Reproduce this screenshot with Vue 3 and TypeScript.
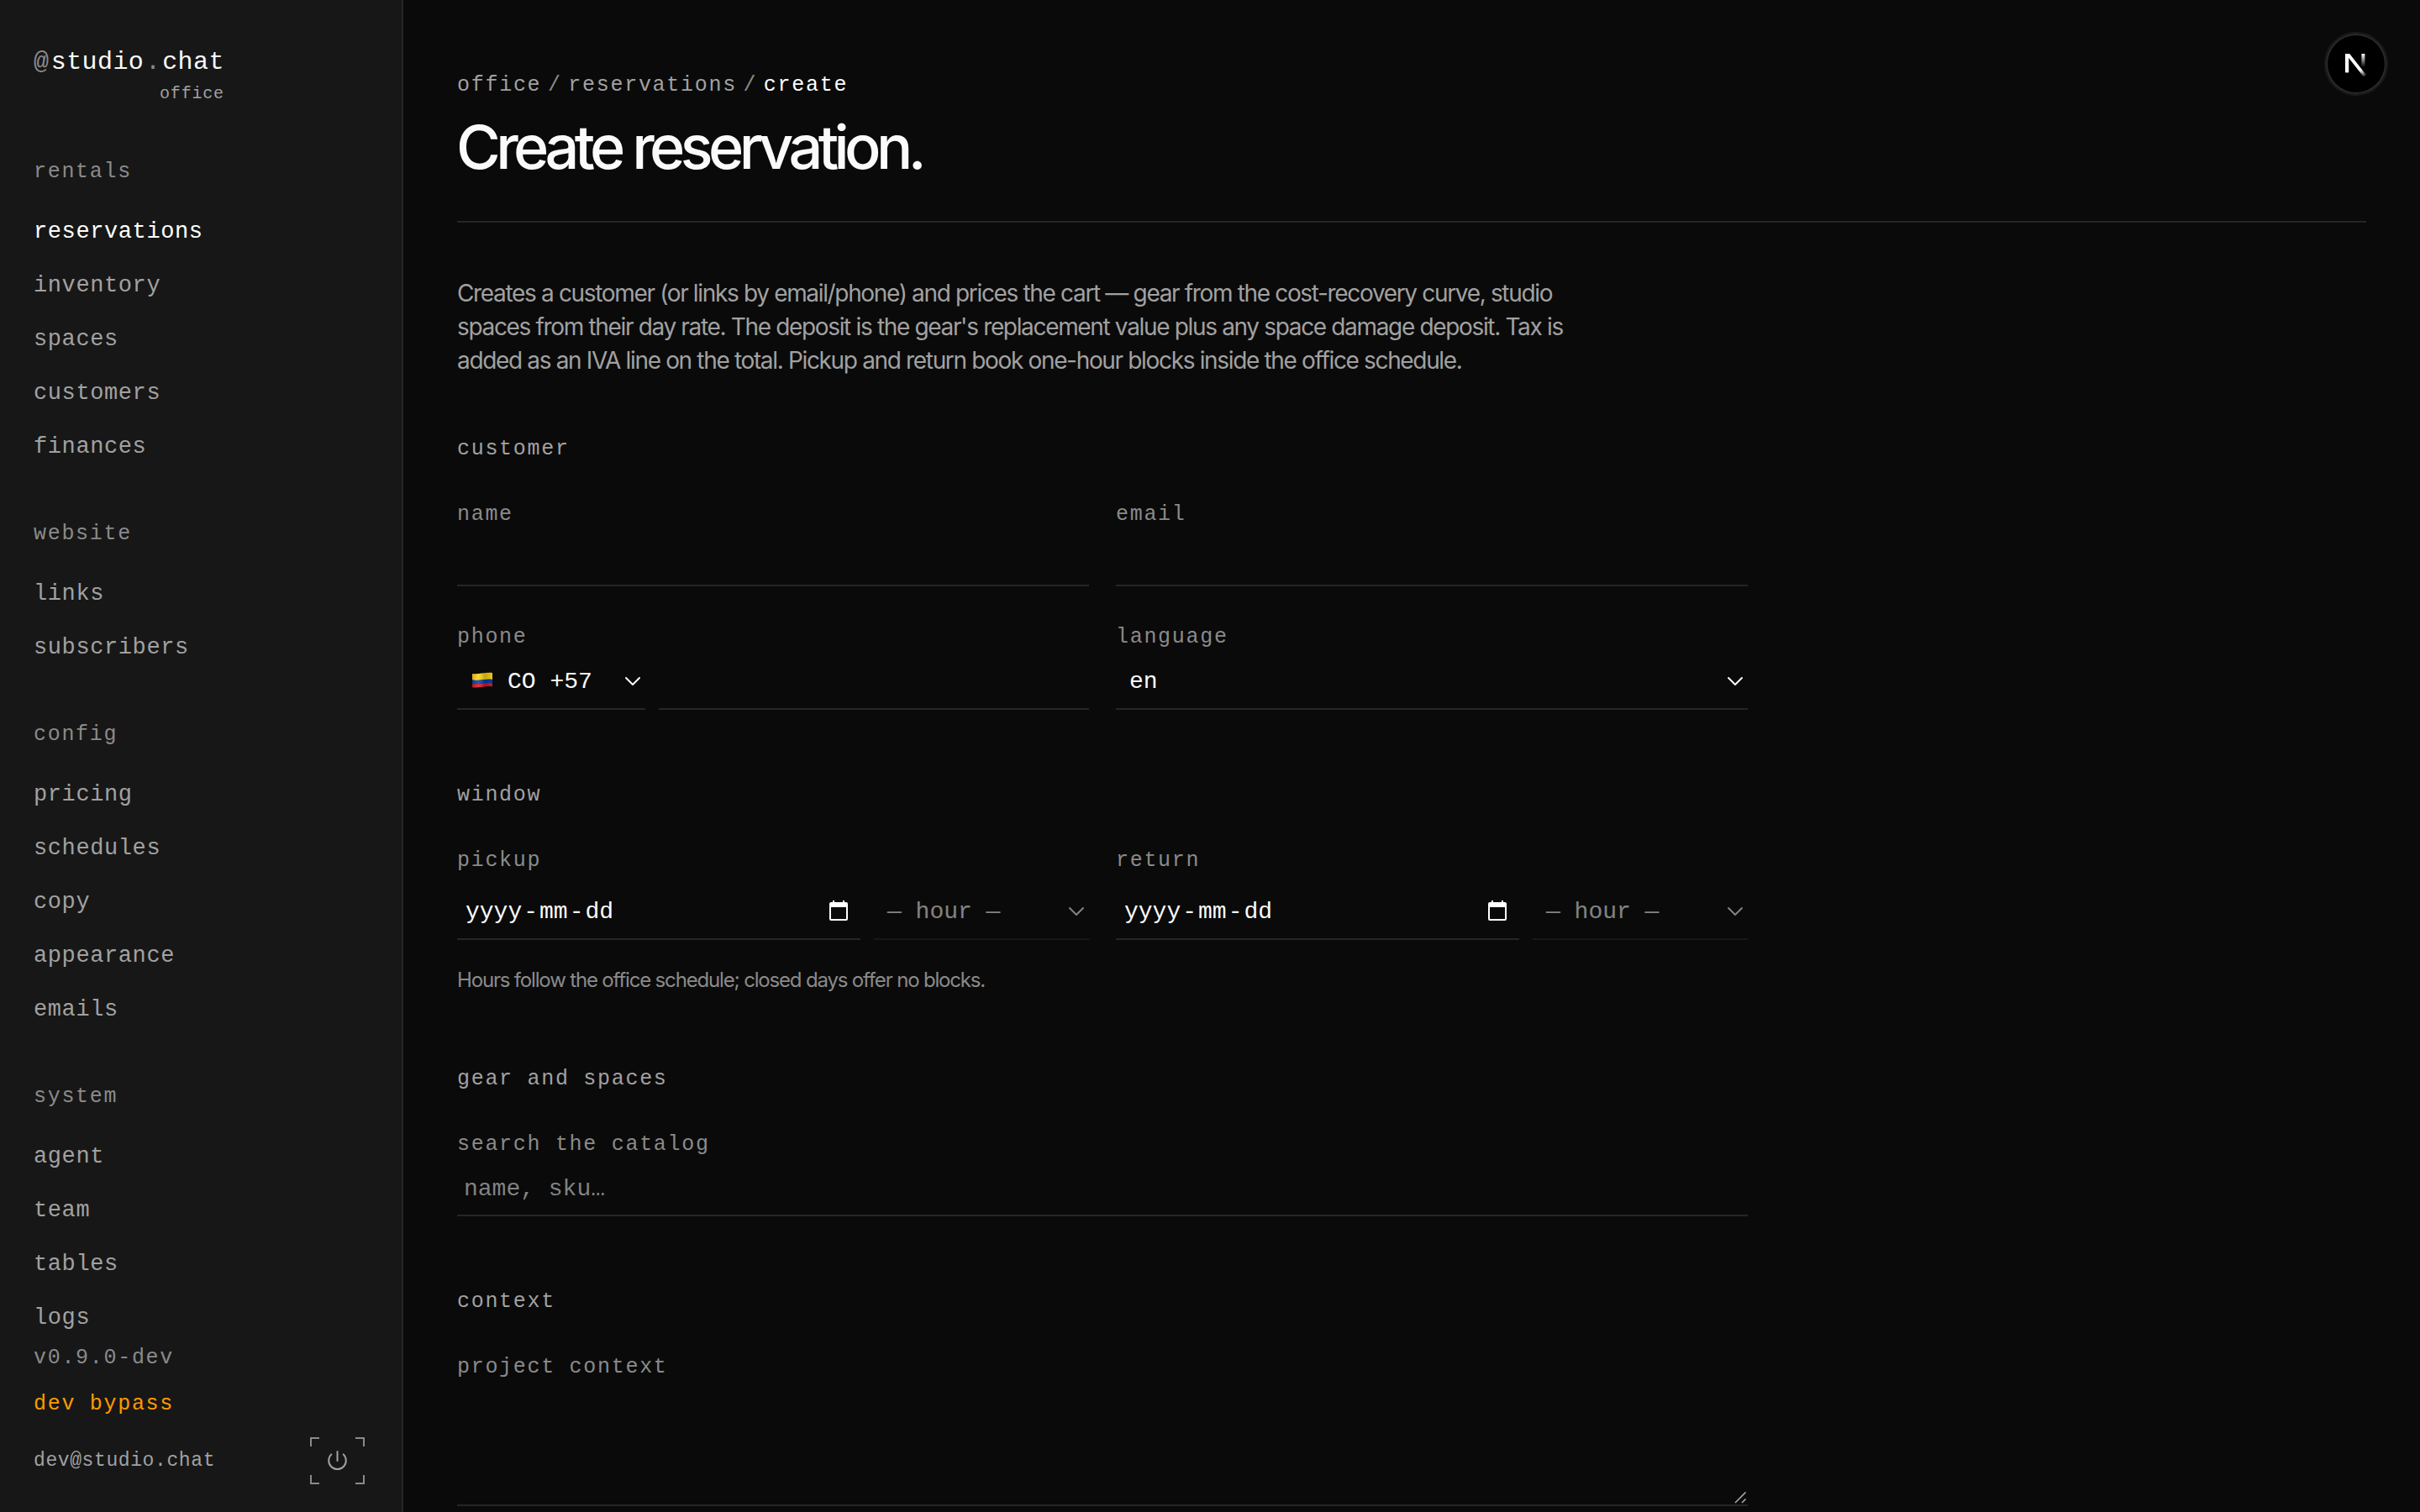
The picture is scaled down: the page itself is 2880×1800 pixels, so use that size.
<script setup lang="ts">
interface NavGroup {
  label: string
  items: string[]
}

const groups: NavGroup[] = [
  { label: 'rentals', items: ['reservations', 'inventory', 'spaces', 'customers', 'finances'] },
  { label: 'website', items: ['links', 'subscribers'] },
  { label: 'config', items: ['pricing', 'schedules', 'copy', 'appearance', 'emails'] },
  { label: 'system', items: ['agent', 'team', 'tables', 'logs'] },
]
const active = 'reservations'
const windows: string[] = ['pickup', 'return']
</script>

<template>
  <div class="app">
    <aside class="sidebar">
      <div class="brand">
        <div class="logo"><span class="dim at">@</span>studio<span class="dim dot">.</span>chat</div>
        <div class="tag">office</div>
      </div>
      <nav class="nav">
        <div v-for="g in groups" :key="g.label" class="group">
          <h2 class="label">{{ g.label }}</h2>
          <a v-for="i in g.items" :key="i" class="item" :class="{ on: i === active }">{{ i }}</a>
        </div>
      </nav>
      <footer class="foot">
        <div class="label">v0.9.0-dev</div>
        <div class="label bypass">dev bypass</div>
        <div class="user">
          <span class="mail">dev@studio.chat</span>
          <svg class="power" width="65" height="56" viewBox="0 0 65 56" fill="none" stroke="#8a8a8a" stroke-width="2">
            <path d="M1 11V1H11M54 1H64V11M64 45V55H54M11 55H1V45" />
            <path d="M32.5 17V28M25.3 20.4A10.3 10.3 0 1 0 39.7 20.4" stroke="#a1a1a1" stroke-linecap="round" />
          </svg>
        </div>
      </footer>
    </aside>

    <main class="main">
      <header class="head">
        <div class="crumbs">
          <span>office</span><span class="sep">/</span><span>reservations</span><span class="sep">/</span><span class="here">create</span>
        </div>
        <h1>Create reservation.</h1>
      </header>

      <p class="intro">
        Creates a customer (or links by email/phone) and prices the cart — gear from the cost-recovery curve, studio<br />
        spaces from their day rate. The deposit is the gear's replacement value plus any space damage deposit. Tax is<br />
        added as an IVA line on the total. Pickup and return book one-hour blocks inside the office schedule.
      </p>

      <div class="form">
        <section>
          <h3>customer</h3>
          <div class="grid">
            <div class="field"><label>name</label><div class="control"></div></div>
            <div class="field"><label>email</label><div class="control"></div></div>
            <div class="field">
              <label>phone</label>
              <div class="row">
                <div class="control tall select country">
                  <svg class="flag" width="26" height="20" viewBox="0 0 26 20">
                    <defs>
                      <linearGradient id="wave" x1="0" x2="1" y1="0" y2="0">
                        <stop offset="0" stop-color="#000" stop-opacity=".15" />
                        <stop offset=".3" stop-color="#fff" stop-opacity=".12" />
                        <stop offset=".62" stop-color="#000" stop-opacity=".22" />
                        <stop offset="1" stop-color="#000" stop-opacity=".05" />
                      </linearGradient>
                    </defs>
                    <path d="M1 2C8 3.4 16 -.2 25 1V9C16 7.6 9 11 1 9.6Z" fill="#fbd116" />
                    <path d="M1 9.6C9 11 16 7.6 25 9V13.4C16 12 9 15.4 1 14Z" fill="#0b3fa8" />
                    <path d="M1 14C9 15.4 16 12 25 13.4V17.2C16 16 9 19.6 1 18.2Z" fill="#d6182c" />
                    <path d="M1 2C8 3.4 16 -.2 25 1V17.2C16 16 9 19.6 1 18.2Z" fill="url(#wave)" />
                  </svg>
                  <span class="code">CO +57</span>
                  <svg class="chev" width="20" height="12" viewBox="0 0 20 12"><path d="M2 2L10 10L18 2" /></svg>
                </div>
                <div class="control tall grow"></div>
              </div>
            </div>
            <div class="field">
              <label>language</label>
              <div class="control tall select">
                <span>en</span>
                <svg class="chev" width="20" height="12" viewBox="0 0 20 12"><path d="M2 2L10 10L18 2" /></svg>
              </div>
            </div>
          </div>
        </section>

        <section>
          <h3>window</h3>
          <div class="grid">
            <div v-for="w in windows" :key="w" class="field">
              <label>{{ w }}</label>
              <div class="row">
                <div class="control date grow">
                  <span class="parts"><span>yyyy</span><span>-</span><span>mm</span><span>-</span><span>dd</span></span>
                  <svg class="calendar" width="22" height="24" viewBox="0 0 22 24" fill="#fff">
                    <path fill-rule="evenodd" d="M4 0H6V2H16V0H18V2H20Q22 2 22 4V22Q22 24 20 24H2Q0 24 0 22V4Q0 2 2 2H4ZM2 8V22H20V8Z" />
                  </svg>
                </div>
                <div class="control date select hour">
                  <span>— hour —</span>
                  <svg class="chev" width="20" height="12" viewBox="0 0 20 12"><path d="M2 2L10 10L18 2" /></svg>
                </div>
              </div>
            </div>
          </div>
          <p class="note">Hours follow the office schedule; closed days offer no blocks.</p>
        </section>

        <section class="after-note">
          <h3>gear and spaces</h3>
          <div class="field">
            <label>search the catalog</label>
            <div class="control search">name, sku…</div>
          </div>
        </section>

        <section>
          <h3>context</h3>
          <div class="field">
            <label>project context</label>
            <div class="control area">
              <svg width="15" height="15" viewBox="0 0 15 15" fill="none" stroke="#a8a8a8" stroke-width="1.6">
                <path d="M1 14L13.5 1.5M9 14L13.5 9.5" />
              </svg>
            </div>
          </div>
        </section>
      </div>
    </main>

    <div class="badge">
      <svg width="28" height="30" viewBox="0 0 28 30">
        <defs>
          <linearGradient id="diag" gradientUnits="userSpaceOnUse" x1="16" y1="17" x2="25" y2="29">
            <stop offset="0" stop-color="#fff" />
            <stop offset=".3" stop-color="#fff" />
            <stop offset="1" stop-color="#fff" stop-opacity="0" />
          </linearGradient>
          <linearGradient id="stem" x1="0" x2="0" y1="0" y2="1">
            <stop offset="0" stop-color="#fff" />
            <stop offset="1" stop-color="#fff" stop-opacity="0" />
          </linearGradient>
        </defs>
        <rect x="1" y="1" width="4.2" height="22.4" fill="#fff" />
        <path d="M1 1H6.2L26 26.3L23 28.6L3.2 3.4Z" fill="url(#diag)" />
        <rect x="20.4" y="1" width="4" height="16" fill="url(#stem)" />
      </svg>
    </div>
  </div>
</template>

<style>
body {
  background: #0a0a0a;
}
</style>

<style scoped>
* {
  box-sizing: border-box;
}
.app {
  display: flex;
  position: relative;
  width: 2880px;
  height: 1800px;
  overflow: hidden;
  background: #0a0a0a;
  color: #fafafa;
  font-family: 'Liberation Mono', 'Courier New', monospace;
}
h1,
h2,
h3,
p {
  margin: 0;
  font-weight: 400;
}
.sidebar {
  display: flex;
  flex-direction: column;
  flex: none;
  width: 480px;
  height: 1800px;
  padding: 54px 44px 33px 40px;
  background: #171717;
  border-right: 2px solid #262626;
}
.brand {
  align-self: flex-start;
  display: flex;
  flex-direction: column;
  align-items: flex-end;
  height: 131px;
}
.logo {
  font-size: 30px;
  line-height: 40px;
  letter-spacing: 0.4px;
  white-space: nowrap;
}
.dim {
  color: #8a8a8a;
}
.at {
  margin-right: 2.4px;
}
.dot {
  margin: 0 1.8px;
}
.tag {
  margin-top: 6px;
  color: #a1a1a1;
  font-size: 20px;
  line-height: 24px;
  letter-spacing: 0.8px;
}
.nav {
  flex: 1;
  min-height: 0;
}
.group {
  display: flex;
  flex-direction: column;
  margin-bottom: 51px;
}
.group:last-child {
  margin-bottom: 0;
}
.label {
  height: 40px;
  color: #8a8a8a;
  font-size: 25px;
  line-height: 40px;
  letter-spacing: 1.7px;
}
.group .label {
  margin-bottom: 20px;
}
.item {
  height: 64px;
  color: #a1a1a1;
  font-size: 27px;
  line-height: 63px;
  letter-spacing: 0.6px;
}
.item.on {
  color: #fff;
}
.foot {
  flex: none;
}
.bypass {
  margin-top: 15px;
  color: #fe9a00;
}
.user {
  display: flex;
  align-items: center;
  justify-content: space-between;
  height: 56px;
  margin-top: 19px;
}
.mail {
  color: #a1a1a1;
  font-size: 23px;
  letter-spacing: 0.6px;
}
.main {
  flex: 1;
  padding: 82px 64px 0;
}
.head {
  height: 183px;
  border-bottom: 2px solid #262626;
}
.crumbs {
  display: flex;
  gap: 7.6px;
  height: 40px;
  color: #a1a1a1;
  font-size: 25px;
  line-height: 40px;
  letter-spacing: 1.72px;
}
.sep {
  color: #8a8a8a;
}
.here {
  color: #fff;
}
h1 {
  margin-top: 13px;
  margin-left: -1px;
  font-family: Inter, sans-serif;
  font-size: 72px;
  font-weight: 500;
  line-height: 80px;
  letter-spacing: -5.6px;
}
.intro {
  margin-top: 64px;
  color: #a1a1a1;
  font-family: Inter, sans-serif;
  font-size: 28px;
  line-height: 40px;
  letter-spacing: -1.34px;
  white-space: nowrap;
}
.form {
  width: 1536px;
  margin-top: 65px;
}
section + section {
  margin-top: 81px;
}
section.after-note {
  margin-top: 79px;
}
h3,
label {
  display: block;
  height: 40px;
  font-size: 25px;
  line-height: 41px;
  letter-spacing: 1.7px;
}
h3 {
  margin-bottom: 38px;
  color: #a1a1a1;
}
label {
  color: #8a8a8a;
}
.grid {
  display: grid;
  grid-template-columns: 1fr 1fr;
  gap: 40px 32px;
}
.row {
  display: flex;
  gap: 16px;
}
.control {
  height: 66px;
  border-bottom: 2px solid #262626;
  font-size: 28px;
}
.tall {
  height: 67px;
}
.grow {
  flex: 1;
}
.select {
  display: flex;
  align-items: center;
  justify-content: space-between;
  padding: 1px 5px 0 16px;
}
.country {
  justify-content: flex-start;
}
.country {
  width: 224px;
}
.code {
  flex: 1;
  margin-left: 17px;
}
.flag {
  margin: -3px 0 0 1px;
}
.chev {
  fill: none;
  stroke: #fafafa;
  stroke-width: 2;
  stroke-linecap: round;
  stroke-linejoin: round;
}
.date {
  display: flex;
  align-items: center;
  justify-content: space-between;
  height: 75px;
  padding: 9px 15px 0 10px;
}
.parts {
  display: flex;
  gap: 2px;
}
.calendar {
  margin-bottom: 2px;
}
.hour {
  flex: none;
  width: 256px;
  padding: 9px 5px 0 16px;
  opacity: 0.5;
}
.note {
  margin-top: 30px;
  color: #8a8a8a;
  font-family: Inter, sans-serif;
  font-size: 24px;
  line-height: 36px;
  letter-spacing: -1.17px;
}
.search {
  padding: 3px 8px 0;
  color: #828282;
  line-height: 61px;
}
.area {
  display: flex;
  align-items: flex-end;
  justify-content: flex-end;
  height: 146px;
  padding: 0 1px 1px 0;
}
.badge {
  position: absolute;
  top: 38px;
  left: 2766px;
  display: flex;
  align-items: center;
  justify-content: center;
  width: 76px;
  height: 76px;
  padding: 4px 1px 0 0;
  background: #000;
  border: 2px solid #1b1b1b;
  border-radius: 50%;
  box-shadow: inset 0 0 0 2px #2c2c2c;
}
</style>
